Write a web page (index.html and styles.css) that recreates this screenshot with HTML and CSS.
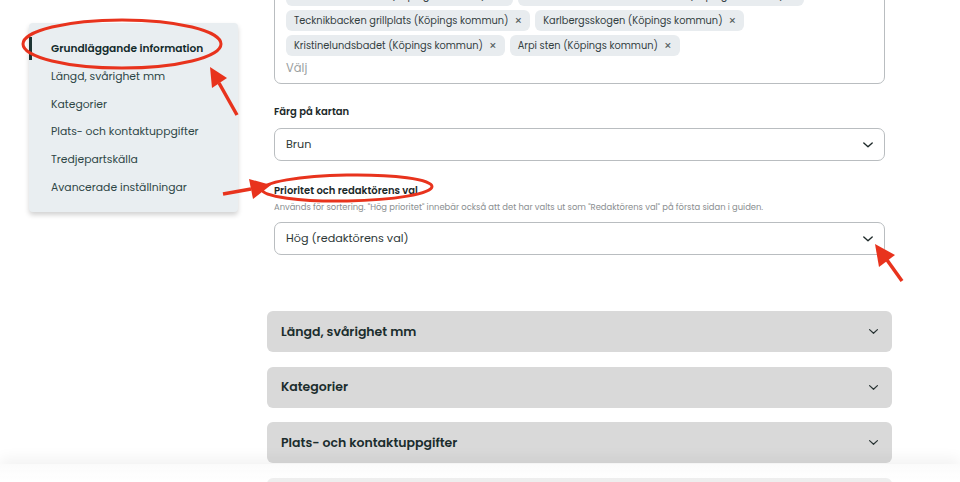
FILE: index.html
```html
<!DOCTYPE html>
<html lang="sv">
<head>
    <meta charset="UTF-8">
    <meta name="viewport" content="width=device-width, initial-scale=1.0">
    <title>Redigera plats</title>
    <link rel="stylesheet" href="styles.css">
</head>
<body>
    <div class="page">
        <nav class="sidenav">
            <a class="sidenav-item active" href="#">Grundläggande information</a>
            <a class="sidenav-item" href="#">Längd, svårighet mm</a>
            <a class="sidenav-item" href="#">Kategorier</a>
            <a class="sidenav-item" href="#">Plats- och kontaktuppgifter</a>
            <a class="sidenav-item" href="#">Tredjepartskälla</a>
            <a class="sidenav-item" href="#">Avancerade inställningar</a>
        </nav>

        <main class="content">
            <section class="form-section">
                <div class="multi">
                    <div class="chips">
                        <span class="chip chip-a">Strömsholms kanal (Köpings kommun) <span class="chip-x">×</span></span>
                        <span class="chip chip-b">Kolbäcksåns naturreservat norra (Köpings kommun) <span class="chip-x">×</span></span>
                        <span class="chip">Tecknikbacken grillplats (Köpings kommun) <span class="chip-x">×</span></span>
                        <span class="chip">Karlbergsskogen (Köpings kommun) <span class="chip-x">×</span></span>
                        <span class="chip">Kristinelundsbadet (Köpings kommun) <span class="chip-x">×</span></span>
                        <span class="chip">Arpi sten (Köpings kommun) <span class="chip-x">×</span></span>
                    </div>
                    <div class="placeholder">Välj</div>
                </div>

                <div class="field">
                    <label class="field-label">Färg på kartan</label>
                    <div class="select">
                        <span>Brun</span>
                        <svg class="chev" width="12" height="8" viewBox="0 0 12 8"><path d="M1.8 2 L6 5.8 L10.2 2" fill="none" stroke="#1f2a2a" stroke-width="1.4" stroke-linecap="round" stroke-linejoin="round"/></svg>
                    </div>
                </div>

                <div class="field">
                    <label class="field-label">Prioritet och redaktörens val</label>
                    <p class="help">Används för sortering. "Hög prioritet" innebär också att det har valts ut som "Redaktörens val" på första sidan i guiden.</p>
                    <div class="select">
                        <span>Hög (redaktörens val)</span>
                        <svg class="chev" width="12" height="8" viewBox="0 0 12 8"><path d="M1.8 2 L6 5.8 L10.2 2" fill="none" stroke="#1f2a2a" stroke-width="1.4" stroke-linecap="round" stroke-linejoin="round"/></svg>
                    </div>
                </div>
            </section>

            <div class="accordions">
                <div class="accordion">
                    <span>Längd, svårighet mm</span>
                    <svg class="chev" width="11" height="7" viewBox="0 0 12 8"><path d="M1.5 1.8 L6 6 L10.5 1.8" fill="none" stroke="#2a3535" stroke-width="1.4" stroke-linecap="round" stroke-linejoin="round"/></svg>
                </div>
                <div class="accordion">
                    <span>Kategorier</span>
                    <svg class="chev" width="11" height="7" viewBox="0 0 12 8"><path d="M1.5 1.8 L6 6 L10.5 1.8" fill="none" stroke="#2a3535" stroke-width="1.4" stroke-linecap="round" stroke-linejoin="round"/></svg>
                </div>
                <div class="accordion">
                    <span>Plats- och kontaktuppgifter</span>
                    <svg class="chev" width="11" height="7" viewBox="0 0 12 8"><path d="M1.5 1.8 L6 6 L10.5 1.8" fill="none" stroke="#2a3535" stroke-width="1.4" stroke-linecap="round" stroke-linejoin="round"/></svg>
                </div>
                <div class="accordion">
                    <span>Tredjepartskälla</span>
                </div>
            </div>
        </main>
    </div>

    <div class="bottom-fade"></div>

    <!-- annoteringar -->
    <svg class="marks" width="960" height="482" viewBox="0 0 960 482">
        <g fill="none" stroke="#e8331d" stroke-width="3">
            <ellipse cx="122" cy="44" rx="99" ry="24"/>
            <ellipse cx="347" cy="188" rx="85" ry="13" transform="rotate(-1 347 188)"/>
            <line x1="237" y1="115" x2="219" y2="83" stroke-width="3.5"/>
            <line x1="223" y1="194" x2="251" y2="189" stroke-width="3.5"/>
            <line x1="902" y1="281" x2="887" y2="260" stroke-width="3.5"/>
        </g>
        <g fill="#e8331d">
            <polygon points="210,67 227,78 212,88"/>
            <polygon points="271,185 253,199 249,179"/>
            <polygon points="875,244 895,255 879,267"/>
        </g>
    </svg>
</body>
</html>
```

FILE: styles.css
```css
body {
    margin: 0;
    padding: 0;
    background-color: #fff;
    font-family: 'Poppins', 'Inter', sans-serif;
    color: #1f2d2d;
    overflow: hidden;
}
.page {
    display: flex;
    align-items: flex-start;
    height: 482px;
}
.sidenav {
    display: flex;
    flex-direction: column;
    width: 209px;
    margin: 23px 29px 0 29px;
    padding: 12px 0 10px;
    background-color: #e9eef1;
    border-radius: 4px;
    box-shadow: 0 3px 5px rgba(0, 0, 0, 0.18);
}
.sidenav-item {
    position: relative;
    display: block;
    height: 27.8px;
    line-height: 27.8px;
    padding-left: 22px;
    font-size: 10.8px;
    color: #2e4646;
    text-decoration: none;
}
.sidenav-item.active {
    font-weight: 600;
    font-size: 10.6px;
    color: #132b2b;
}
.sidenav-item.active::before {
    content: "";
    position: absolute;
    left: 0;
    top: 2px;
    width: 3px;
    height: 23px;
    background-color: #1d3434;
}
.content {
    width: 625px;
    margin-top: -24px;
}
.form-section {
    padding: 0 7px;
}
.multi {
    border: 1px solid #b9bdc0;
    border-radius: 7px;
    padding: 8px 11px 5px;
}
.chips {
    display: flex;
    flex-wrap: wrap;
    gap: 4px 5px;
}
.chip {
    display: inline-flex;
    align-items: center;
    height: 21px;
    padding: 0 8px;
    background-color: #e8ecef;
    border-radius: 6px;
    font-size: 9.8px;
    color: #33403f;
    white-space: nowrap;
}
.chip-x {
    margin-left: 6px;
    font-size: 12px;
    color: #555e5e;
}
.chip-a {
    width: 211px;
    overflow: hidden;
}
.chip-b {
    width: 270px;
    overflow: hidden;
}
.placeholder {
    margin-top: 2px;
    height: 20px;
    line-height: 20px;
    font-size: 11.5px;
    color: #9a9ea0;
}
.field {
    margin-top: 20px;
}
.field-label {
    display: block;
    height: 16px;
    line-height: 16px;
    font-size: 10px;
    font-weight: 600;
    color: #1b2929;
    margin-bottom: 8px;
}
.field + .field {
    margin-top: 22px;
}
.field + .field .field-label {
    margin-bottom: 1px;
}
.help {
    margin: 0 0 8px;
    height: 14px;
    line-height: 14px;
    font-size: 8.4px;
    color: #8a8e90;
}
.select {
    display: flex;
    align-items: center;
    justify-content: space-between;
    height: 31px;
    padding: 0 10px 0 11px;
    border: 1px solid #b9bdc0;
    border-radius: 7px;
    font-size: 11.2px;
    color: #2e3838;
}
.accordions {
    display: flex;
    flex-direction: column;
    gap: 14.5px;
    margin-top: 56px;
}
.accordion {
    display: flex;
    align-items: center;
    justify-content: space-between;
    height: 41px;
    padding: 0 13px 0 14px;
    background-color: #d9d9d9;
    border-radius: 6px;
    font-size: 12.5px;
    font-weight: 600;
    color: #1b2d2d;
}
.bottom-fade {
    position: fixed;
    left: 0;
    right: 0;
    bottom: 0;
    height: 18px;
    background: linear-gradient(to bottom, rgba(250, 250, 250, 0.75), rgba(255, 255, 255, 0.55));
    box-shadow: 0 -6px 14px rgba(0, 0, 0, 0.05);
}
.marks {
    position: absolute;
    left: 0;
    top: 0;
    pointer-events: none;
}
```
